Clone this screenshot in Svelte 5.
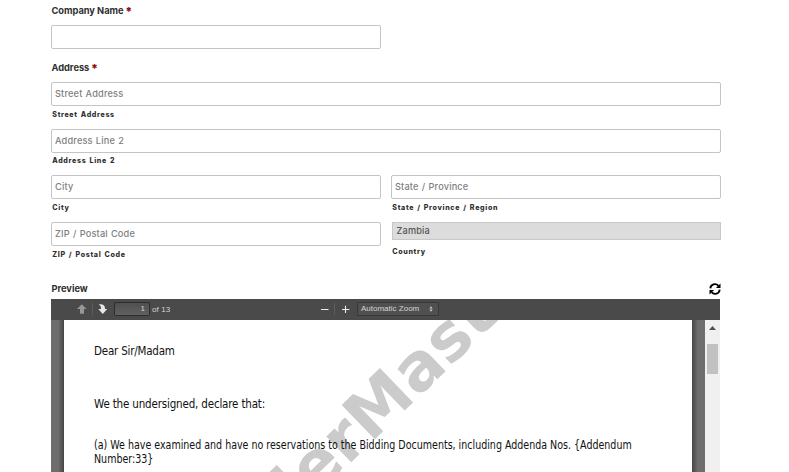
<script>
  const lines = [
    { text: 'Dear Sir/Madam', top: 24, spacing: -0.21 },
    { text: 'We the undersigned, declare that:', top: 39, spacing: -0.17 },
  ];
</script>

<main>
  <label class="title" for="company">Company Name <b>*</b></label>
  <input id="company" class="half" />

  <div class="title address">Address <b>*</b></div>
  <div class="row">
    <div class="field"><input placeholder="Street Address" /><span class="sub">Street Address</span></div>
  </div>
  <div class="row short">
    <div class="field"><input placeholder="Address Line 2" /><span class="sub">Address Line 2</span></div>
  </div>
  <div class="row">
    <div class="field"><input placeholder="City" /><span class="sub">City</span></div>
    <div class="field"><input placeholder="State / Province" /><span class="sub">State / Province / Region</span></div>
  </div>
  <div class="row last">
    <div class="field"><input placeholder="ZIP / Postal Code" /><span class="sub">ZIP / Postal Code</span></div>
    <div class="field"><div class="country">Zambia</div><span class="sub">Country</span></div>
  </div>

  <div class="preview">
    <span class="title">Preview</span>
    <svg class="refresh" width="12" height="12" viewBox="0 0 12 12">
      <path d="M1.3 5.4A4.6 4.6 0 0 1 9.4 2.8M10.7 6.6A4.6 4.6 0 0 1 2.6 9.2" fill="none" stroke="#000" stroke-width="1.8" />
      <path d="M11.5 .4V5H6.9ZM.5 11.6V7H5.1Z" />
    </svg>
  </div>

  <section class="viewer">
    <div class="toolbar">
      <svg class="up" width="10" height="10" viewBox="0 0 10 10"><path d="M4.8 .3 9.5 5H7V9.7H3V5H0Z" fill="#979797" /></svg>
      <i class="sep"></i>
      <svg class="down" width="10" height="10" viewBox="0 0 10 10"><path d="M.8 .5C4.5 -.1 7.2 .8 7 5H9.2L4.8 9.9 .3 5H3C3.2 3 2.4 1.4 .8 .5Z" fill="#e6e6e6" /></svg>
      <div class="page-no">1</div>
      <span class="of">of 13</span>
      <svg class="minus" width="8" height="8" viewBox="0 0 8 8"><path d="M0 4.5H7.5" stroke="#eee" /></svg>
      <i class="sep zoom-sep"></i>
      <svg class="plus" width="8" height="8" viewBox="0 0 8 8"><path d="M0 4.5H7.4M3.5 .8V8" stroke="#eee" stroke-width="1.1" /></svg>
      <div class="zoom">
        <span>Automatic Zoom</span>
        <svg width="4" height="6" viewBox="0 0 4 6"><path d="M.4 2.4 2 .2 3.6 2.4ZM.4 3.6 2 5.8 3.6 3.6Z" fill="#ccc" /></svg>
      </div>
    </div>
    <div class="canvas">
      <div class="gutter"></div>
      <div class="paper">
        <svg class="watermark" width="628" height="152">
          <g transform="translate(306.5 123.5) rotate(-44)">
            <text text-anchor="end">Tender</text>
            <text>Master</text>
          </g>
        </svg>
        <div class="doc">
          {#each lines as line}
            <p style="margin-top: {line.top}px; letter-spacing: {line.spacing}px">{line.text}</p>
          {/each}
          <p class="clause">(a) We have examined and have no reservations to the Bidding Documents, including Addenda Nos. &#123;Addendum<br />Number:33&#125;</p>
        </div>
      </div>
      <div class="gutter"></div>
      <div class="scroll">
        <svg width="7" height="4" viewBox="0 0 7 4"><path d="M0 4 3.5 0 7 4Z" fill="#505050" /></svg>
        <div class="thumb"></div>
      </div>
    </div>
  </section>
</main>

<style>
  :global(body) { background: #fff; overflow: hidden; }
  main {
    width: 670px; height: 472px; margin-left: 51px; overflow: hidden;
    font-family: Inter, "Noto Sans", sans-serif; color: #303030;
  }
  .title { display: block; height: 12px; margin: 4px 0 9px .5px; font-size: 9.3px; line-height: 13px; font-weight: 700; letter-spacing: -.03px; white-space: nowrap; }
  .title b { color: #8b1018; font-size: 11.5px; line-height: 1px; vertical-align: -2px; margin-left: -.5px; }
  .address { margin: 12px 0 9px .5px; }
  input {
    display: block; box-sizing: border-box; width: 100%; height: 24px; padding: 0 3px 1px;
    border: 1px solid #c4c4c4; border-radius: 2px; background: #fff; outline: 0;
    font: 500 9.2px Inter, sans-serif; letter-spacing: .18px; word-spacing: .5px;
  }
  input::placeholder { color: #808080; opacity: 1; }
  .half { width: 330px; }
  .row { display: flex; gap: 10px; height: 47px; }
  .short { height: 46px; }
  .last { height: 60px; }
  .field { flex: 1; min-width: 0; }
  .sub { display: block; margin: 4px 0 0 1.3px; font-size: 7.1px; line-height: 10px; font-weight: 800; letter-spacing: .66px; word-spacing: .9px; white-space: nowrap; }
  .short .sub { margin-top: 3px; }
  .country {
    box-sizing: border-box; height: 18px; margin-left: 1px; padding-left: 3.5px; border: 1px solid #c8c8c8;
    background: #dcdcdc; color: #555; font-size: 9.2px; line-height: 16px; font-weight: 500; letter-spacing: .15px;
  }
  .country + .sub { margin-top: 7px; }
  .preview { display: flex; justify-content: space-between; height: 17px; }
  .preview .title { margin: 0 0 0 .5px; }
  .refresh { margin-top: 1px; }
  .viewer { width: 669px; height: 173px; background: #4a4a4a; }
  .toolbar { display: flex; align-items: center; height: 21px; box-sizing: border-box; padding: 0 0 1px 26px; color: #d4d4d4; font: 8px "Liberation Sans", sans-serif; }
  .toolbar > * { flex: none; }
  .sep { width: 1px; height: 12px; margin: 0 5px; background: #5c5c5c; }
  .page-no {
    box-sizing: border-box; width: 36px; height: 14px; margin-left: 6px; padding-right: 4px;
    border: 1px solid #2d2d2d; border-radius: 1px; background: linear-gradient(#505050, #606060); line-height: 12px; text-align: right;
  }
  .of { width: 30px; margin-left: 2px; letter-spacing: .1px; }
  .minus { margin-left: 139px; }
  .zoom-sep { margin: 0 7px 0 5px; }
  .zoom {
    display: flex; align-items: center; justify-content: space-between; box-sizing: border-box;
    width: 82px; height: 14px; margin-left: 7px; padding: 0 5px 0 3px; border: 1px solid #383838; border-radius: 1px; background: #505050;
  }
  .zoom span { margin-top: -1px; }
  .canvas { display: flex; height: 152px; }
  .gutter { width: 13px; background: linear-gradient(90deg, #6e6e6e 55%, #454545); }
  .paper + .gutter { background: linear-gradient(90deg, #454545, #6e6e6e 45%); }
  .paper { position: relative; width: 628px; overflow: hidden; background: #fff; }
  .watermark { position: absolute; inset: 0; }
  .watermark text { font: bold 65.5px "DejaVu Sans", sans-serif; fill: #cbcbcb; }
  .doc { position: relative; padding-left: 30px; color: #111; font: 11.5px/14px "DejaVu Sans Condensed", "DejaVu Sans", sans-serif; font-stretch: condensed; white-space: nowrap; }
  .doc p { margin: 0; }
  .doc .clause { width: max-content; margin-top: 27px; transform: scaleX(.919); transform-origin: 0 0; }
  .scroll { display: flex; flex-direction: column; align-items: center; width: 15px; background: #f0f0f0; }
  .scroll svg { margin-top: 6px; }
  .thumb { width: 11px; height: 30px; margin-top: 14px; background: #c1c1c1; }
</style>
